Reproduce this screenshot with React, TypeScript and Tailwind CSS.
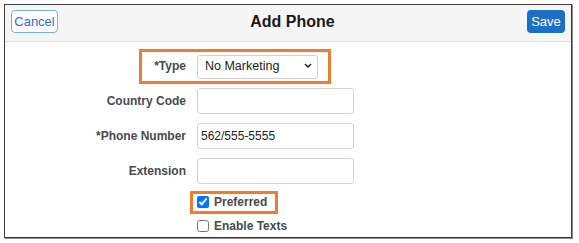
import React from 'react';

const fields = [
    { label: 'Country Code', value: '' },
    { label: '*Phone Number', value: '562/555-5555' },
    { label: 'Extension', value: '' },
];

export default function App() {
    return (
        <div className="bg-white w-[579px] h-[243px] p-[4px] font-['Liberation_Sans',Arial,sans-serif]">
            <div className="relative w-[568px] h-[234px] border border-[#3a3a3a] shadow-[1px_1px_0_#8a8a8a] bg-white">
                {/* header */}
                <div className="flex items-start h-[37px] pt-[5px] px-[6px] bg-[#f5f5f5] border-b border-[#dcdcdc]">
                    <button className="h-[23px] w-[47px] rounded-[4px] border border-[#7aaee3] bg-white text-[13px] text-[#2d6fc1]">
                        Cancel
                    </button>
                    <div className="flex-1 text-center text-[16px] leading-[23px] font-bold text-[#1a1a1a]">Add Phone</div>
                    <button className="h-[23px] w-[38px] rounded-[4px] bg-[#1f6ec6] text-[13px] text-white">
                        Save
                    </button>
                </div>

                {/* form */}
                <div className="flex flex-col pt-[11px]">
                    <div className="flex items-center h-[26px] gap-[11px]">
                        <label className="w-[181px] text-right text-[12px] font-bold text-[#4a4a4a]">*Type</label>
                        <div className="relative">
                            <select
                                defaultValue="nomkt"
                                className="appearance-none w-[121px] h-[24px] pl-[7px] rounded-[3px] border border-[#d2d2d2] bg-white text-[12.5px] text-[#222] outline-none"
                            >
                                <option value="nomkt">No Marketing</option>
                            </select>
                            <svg className="absolute right-[6px] top-[10px] pointer-events-none" width="8" height="5" viewBox="0 0 8 5">
                                <path d="M1 1 L4 4 L7 1" fill="none" stroke="#222" strokeWidth="1.5" />
                            </svg>
                        </div>
                    </div>

                    {fields.map((f) => (
                        <div key={f.label} className="flex items-center h-[26px] gap-[11px] mt-[9px]">
                            <label className="w-[181px] text-right text-[12px] font-bold text-[#4a4a4a]">{f.label}</label>
                            <input
                                defaultValue={f.value}
                                className="w-[157px] h-[26px] px-[3px] rounded-[3px] border border-[#d2d2d2] text-[12px] text-[#222] outline-none"
                            />
                        </div>
                    ))}

                    <div className="flex items-center h-[18px] mt-[9px] ml-[192px] gap-[5px]">
                        <input type="checkbox" defaultChecked className="w-[12px] h-[12px] accent-[#0075ff]" />
                        <span className="text-[12px] font-bold text-[#4a4a4a]">Preferred</span>
                    </div>
                    <div className="flex items-center h-[18px] mt-[6px] ml-[192px] gap-[5px]">
                        <input type="checkbox" className="w-[12px] h-[12px] accent-[#0075ff]" />
                        <span className="text-[12px] font-bold text-[#4a4a4a]">Enable Texts</span>
                    </div>
                </div>

                {/* annotation boxes */}
                <div className="absolute left-[134px] top-[44px] w-[192px] h-[35px] border-[3px] border-[#ed7d31] pointer-events-none" />
                <div className="absolute left-[185px] top-[186px] w-[88px] h-[23px] border-[3px] border-[#ed7d31] pointer-events-none" />
            </div>
        </div>
    );
}
